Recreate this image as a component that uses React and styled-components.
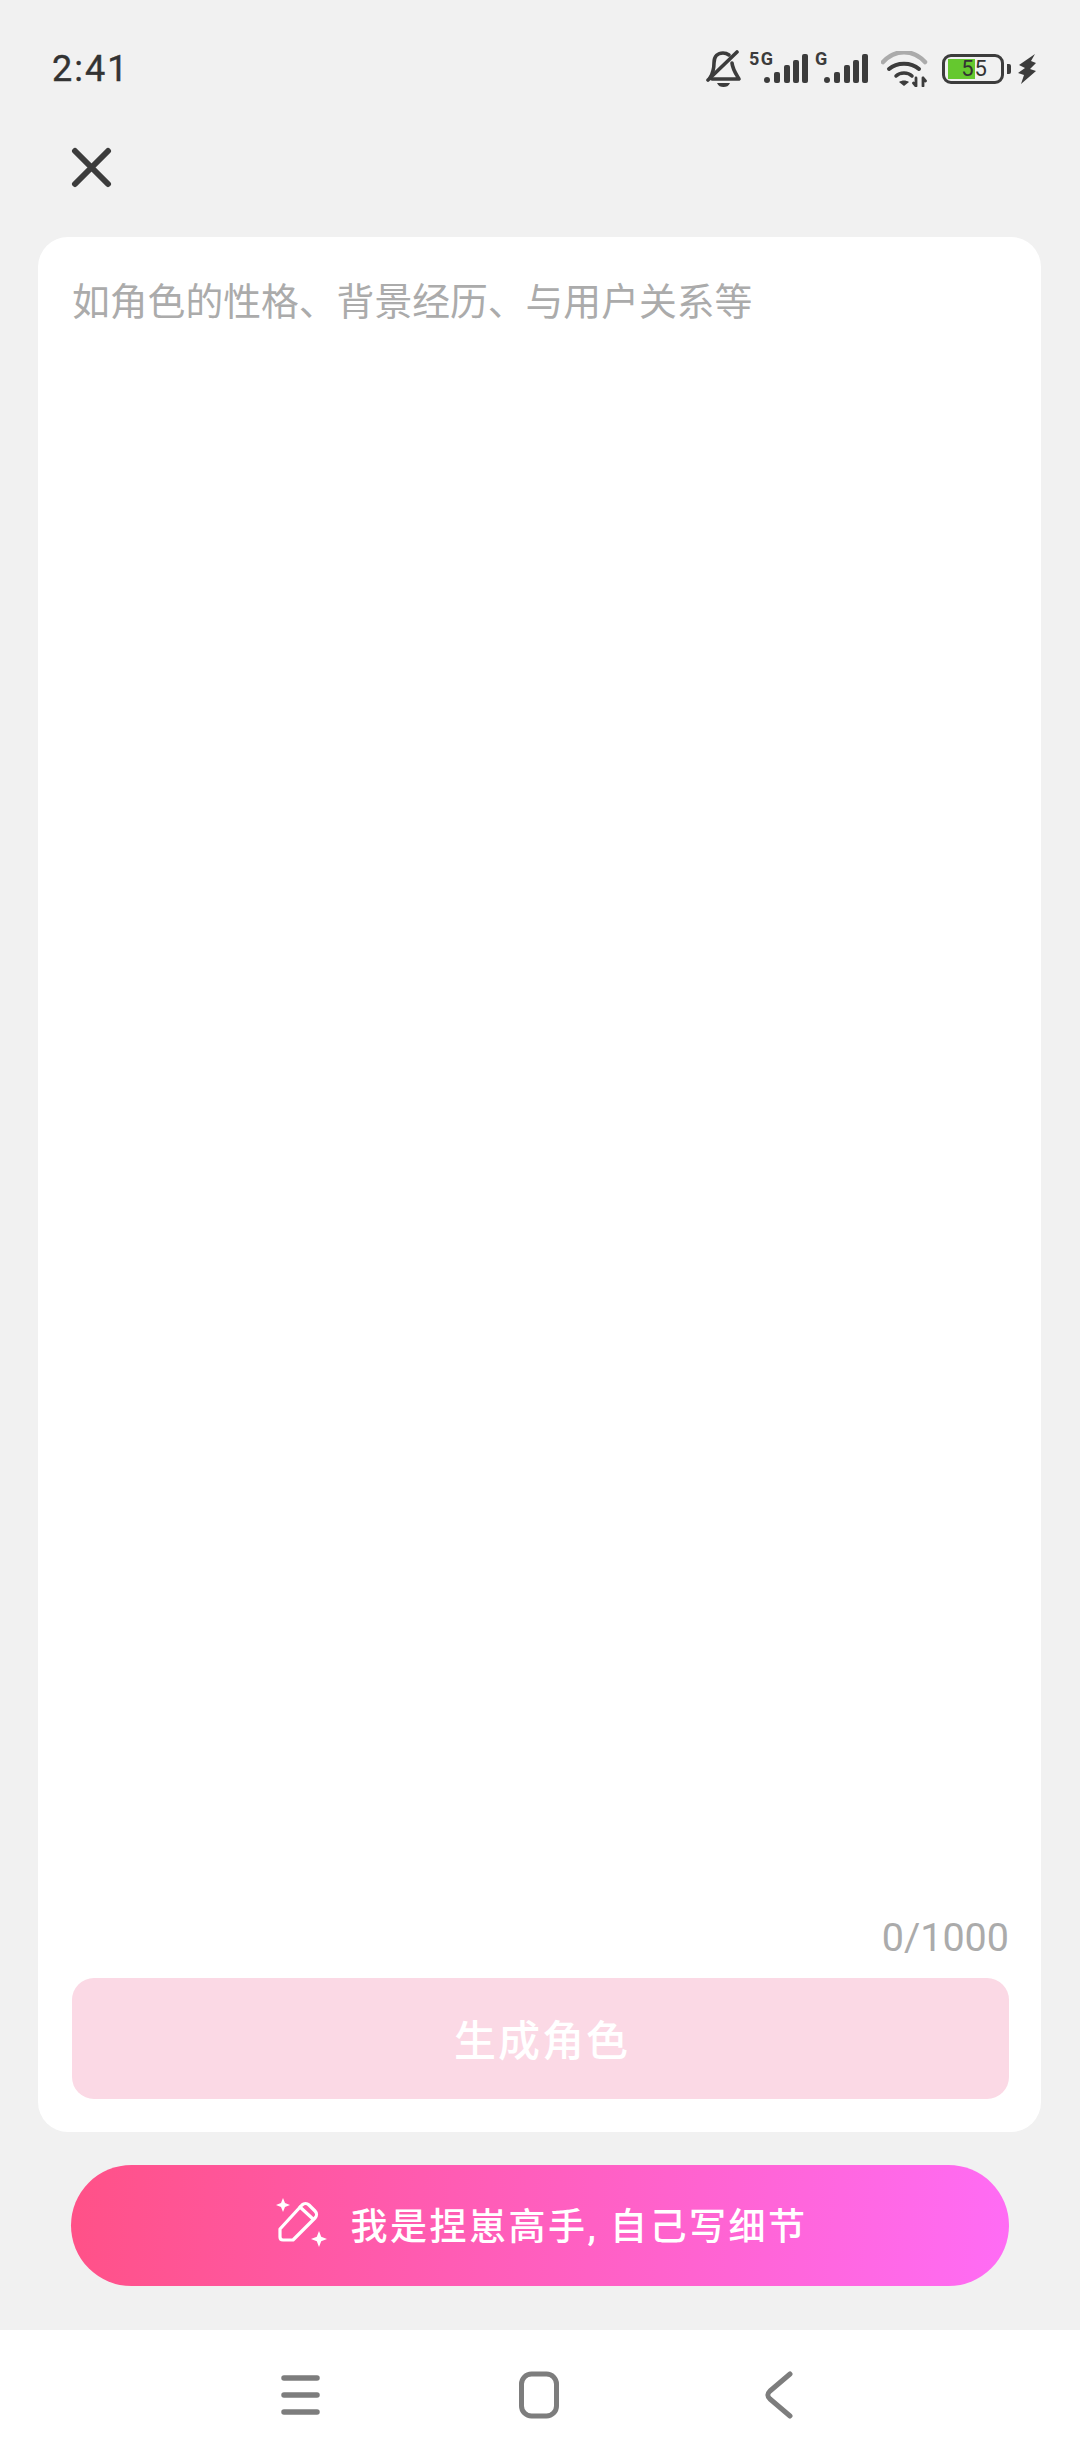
import styled, { createGlobalStyle } from "styled-components";

const GlobalStyle = createGlobalStyle`
    html, body {
        margin: 0;
        padding: 0;
    }

    body {
        background-color: #f1f1f1;
        font-family: "Roboto", "Noto Sans CJK SC", sans-serif;
    }
`

const SignalIcon = ({ label, width }) => (
    <svg width={width} height="50" viewBox={`0 0 ${width} 50`}>
        <text x="0" y="21" fontFamily="Roboto" fontWeight="700" fontSize="18" letterSpacing="1.5" fill="#3c3c3c">{label}</text>
        <g fill="#3c3c3c">
            <rect x={width - 44} y="33" width="6" height="6" rx="3" />
            <rect x={width - 34} y="28" width="6" height="11" rx="2" />
            <rect x={width - 24} y="21" width="6" height="18" rx="2" />
            <rect x={width - 15} y="16" width="6" height="23" rx="2" />
            <rect x={width - 6} y="10" width="6" height="29" rx="2" />
        </g>
    </svg>
)

export default function App() {
    return (
        <>
            <GlobalStyle />
            <Page>
                <StatusBar>
                    <Time>2:41</Time>
                    <StatusIcons>
                        <svg width="36" height="40" viewBox="0 0 36 40" fill="none" stroke="#3c3c3c" strokeWidth="3.6" strokeLinecap="round" strokeLinejoin="round">
                            <path d="M4 29C7 24 8 20 8 14 8 7 12 4 17 4c2 0 4 .5 6 2" />
                            <path d="M26 14c.5 6 4 11 7 16H6" />
                            <path d="M2 31 31 3" />
                            <path d="M11 34h13c-1.500 3-3.500 4-6.500 4s-5-1-6.500-4z" fill="#3c3c3c" stroke="none" />
                        </svg>
                        <SignalIcon label="5G" width={59} />
                        <SignalIcon label="G" width={53} />
                        <WifiIcon width="48" height="36" viewBox="0 0 48 36" fill="none" strokeLinecap="round">
                            <path d="M2 11C14-2 32-2 44 11" stroke="#ababab" strokeWidth="4.500" />
                            <path d="M8 18c8-7 22-7 30 0" stroke="#3c3c3c" strokeWidth="4" />
                            <path d="M15 25c4-4 12-4 16 0" stroke="#3c3c3c" strokeWidth="3.500" />
                            <path d="M18 31c3-2 7-2 10 0l-5 4z" fill="#3c3c3c" />
                            <path d="M35 27v8M32.500 32l2.500 3M42 35v-8M44.500 30 42 27" stroke="#3c3c3c" strokeWidth="2.800" />
                        </WifiIcon>
                        <Battery>
                            <BatteryBody>
                                <BatteryFill />
                                <BatteryLevel>55</BatteryLevel>
                            </BatteryBody>
                            <BatteryCap />
                        </Battery>
                        <svg width="18" height="30" viewBox="0 0 18 30" fill="#3c3c3c">
                            <path d="M17 0 1 11l6 3-7 5 6 2-3 9 15-13-6-2 6-6-5-2z" />
                        </svg>
                    </StatusIcons>
                </StatusBar>

                <CloseRow>
                    <svg width="42" height="42" viewBox="0 0 42 42" fill="none" stroke="#3c3c3c" strokeWidth="6" strokeLinecap="round">
                        <path d="M5 5l33 33M38 5 5 38" />
                    </svg>
                </CloseRow>

                <Card>
                    <Placeholder>如角色的性格、背景经历、与用户关系等</Placeholder>
                    <Counter>0/1000</Counter>
                    <GenerateBtn>生成角色</GenerateBtn>
                </Card>

                <WriteBtn>
                    <svg width="56" height="54" viewBox="0 0 56 54" fill="none" stroke="#fff" strokeWidth="3.200" strokeLinejoin="round" strokeLinecap="round">
                        <path d="M9 32 31 8c2-2 5-2 7 0l6 6c2 2 2 5 0 7L22 43H12c-2 0-3-1-3-3z" />
                        <path d="M29 10l13 12" />
                        <path fill="#fff" stroke="none" d="M12 1l2 5 5 2-5 2-2 5-2-5-5-2 5-2zM48 34l2.200 5.800 5.800 2.200-5.800 2.200-2.200 5.800-2.200-5.800-5.800-2.200 5.800-2.200z" />
                    </svg>
                    <WriteLabel>我是捏崽高手, 自己写细节</WriteLabel>
                </WriteBtn>

                <NavBar>
                    <svg width="42" height="42" viewBox="0 0 42 42" stroke="#7d7d7d" strokeWidth="5.500" strokeLinecap="round">
                        <path d="M5 4h33M5 21h33M5 38h33" />
                    </svg>
                    <HomeIcon width="42" height="48" viewBox="0 0 42 48" fill="none" stroke="#7d7d7d" strokeWidth="5">
                        <rect x="3.500" y="3" width="35" height="42" rx="10" />
                    </HomeIcon>
                    <svg width="28" height="48" viewBox="0 0 28 48" fill="none" stroke="#7d7d7d" strokeWidth="5" strokeLinecap="round" strokeLinejoin="round">
                        <path d="M25 3 5 20c-3 3-3 5 0 8l20 17" />
                    </svg>
                </NavBar>
            </Page>
        </>
    )
}

const Page = styled.div`
    display: flex;
    flex-direction: column;
    width: 1080px;
    height: 2460px;
    overflow: hidden;
    background-color: #f1f1f1;
`

const StatusBar = styled.div`
    display: flex;
    justify-content: space-between;
    align-items: center;
    height: 50px;
    padding: 44px 44px 0 52px;
`

const Time = styled.div`
    font-size: 36px;
    font-weight: 400;
    letter-spacing: 2px;
    color: #333333;
    -webkit-text-stroke: 0.4px #333333;
`

const StatusIcons = styled.div`
    display: flex;
    align-items: center;
    gap: 7px;
`

const WifiIcon = styled.svg`
    margin-left: 6px;
`

const Battery = styled.div`
    display: flex;
    align-items: center;
    gap: 3px;
    margin-left: 6px;
`

const BatteryBody = styled.div`
    position: relative;
    display: flex;
    justify-content: center;
    align-items: center;
    box-sizing: border-box;
    width: 62px;
    height: 30px;
    padding-left: 3px;
    border: 3.500px solid #3c3c3c;
    border-radius: 9px;
`

const BatteryFill = styled.div`
    position: absolute;
    top: 2px;
    bottom: 2px;
    left: 3px;
    width: 27px;
    background-color: #65c82f;
`

const BatteryLevel = styled.span`
    position: relative;
    font-size: 22px;
    letter-spacing: 1px;
    line-height: 1;
    color: #333333;
`

const BatteryCap = styled.div`
    width: 4px;
    height: 10px;
    border-radius: 0 2px 2px 0;
    background-color: #3c3c3c;
`

const CloseRow = styled.div`
    display: flex;
    align-items: center;
    height: 143px;
    padding: 2px 0 0 70px;
    box-sizing: border-box;
`

const Card = styled.div`
    display: flex;
    flex-direction: column;
    box-sizing: border-box;
    width: 1003px;
    height: 1895px;
    margin-left: 38px;
    padding: 40px 32px 33px 34px;
    background-color: #ffffff;
    border-radius: 30px;
`

const Placeholder = styled.div`
    flex: 1;
    font-size: 37.800px;
    line-height: 50px;
    color: #ababab;
`

const Counter = styled.div`
    align-self: flex-end;
    margin: 0 0 16px 0;
    font-size: 39.500px;
    font-weight: 400;
    line-height: 48px;
    color: #ababab;
`

const GenerateBtn = styled.div`
    display: flex;
    justify-content: center;
    align-items: center;
    box-sizing: border-box;
    height: 121px;
    padding: 0 0 3px 3px;
    background-color: #fbd9e5;
    border-radius: 22px;
    color: #ffffff;
    font-size: 42px;
    font-weight: 500;
    letter-spacing: 2px;
`

const WriteBtn = styled.div`
    display: flex;
    justify-content: center;
    align-items: center;
    gap: 24px;
    box-sizing: border-box;
    width: 938px;
    height: 121px;
    margin: 33px 0 0 71px;
    padding: 0 2px 3px 0;
    background: linear-gradient(95deg, #ff5187, #ff6cf5);
    border-radius: 61px;
`

const WriteLabel = styled.span`
    color: #ffffff;
    font-size: 37px;
    font-weight: 500;
    letter-spacing: 2.500px;
`

const NavBar = styled.div`
    display: flex;
    justify-content: space-between;
    align-items: center;
    height: 130px;
    margin-top: 44px;
    padding: 0 287px 0 279px;
    background-color: #ffffff;
`

const HomeIcon = styled.svg`
    margin-right: 8px;
`
